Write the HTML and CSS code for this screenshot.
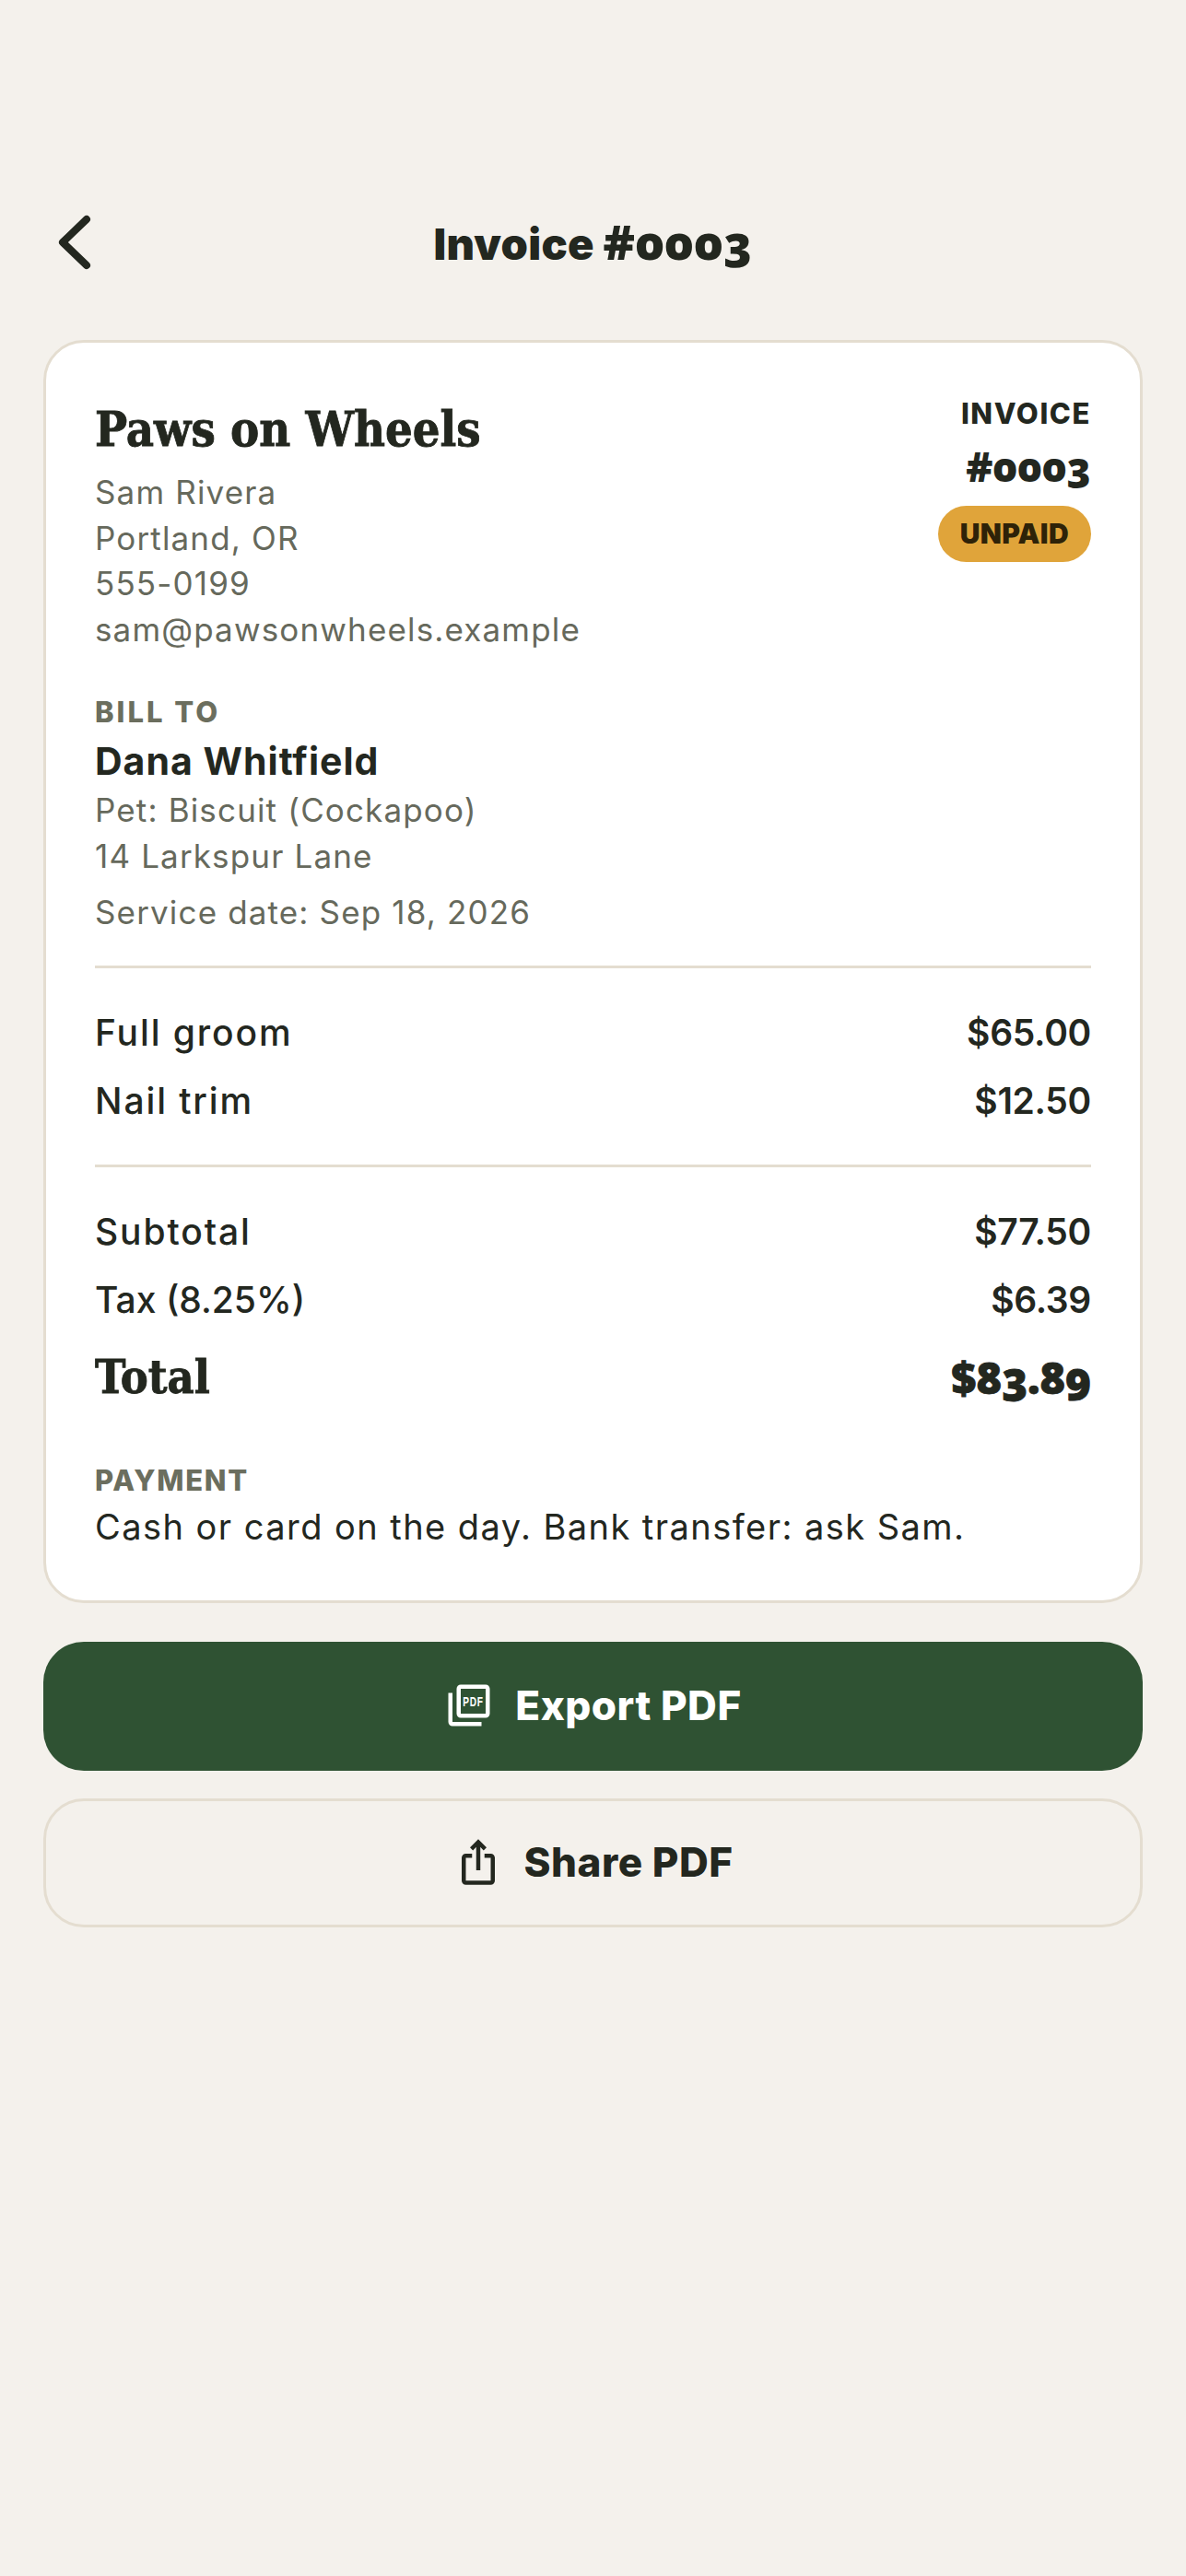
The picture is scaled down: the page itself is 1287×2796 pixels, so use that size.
FILE: index.html
```html
<!DOCTYPE html>
<html lang="en">
<head>
    <meta charset="UTF-8">
    <meta name="viewport" content="width=device-width, initial-scale=1.0">
    <title>Invoice #0003</title>
    <link rel="stylesheet" href="styles.css">
</head>
<body>
    <div class="page">
        <header class="top-bar">
            <svg class="back-icon" viewBox="0 0 40 64" aria-label="Back">
                <path d="M33 7 L7 32 L33 57"></path>
            </svg>
            <h1 class="top-title">Invoice <span class="old-nums title-nums">#0003</span></h1>
        </header>

        <main class="invoice-card">
            <div class="invoice-head">
                <div class="business">
                    <h2 class="business-name">Paws on Wheels</h2>
                    <div class="muted-line">Sam Rivera</div>
                    <div class="muted-line">Portland, OR</div>
                    <div class="muted-line">555-0199</div>
                    <div class="muted-line">sam@pawsonwheels.example</div>
                </div>
                <div class="invoice-meta">
                    <div class="meta-label">INVOICE</div>
                    <div class="meta-number old-nums">#0003</div>
                    <div class="status-badge">UNPAID</div>
                </div>
            </div>

            <div class="section-label bill-label">BILL TO</div>
            <div class="client-name">Dana Whitfield</div>
            <div class="muted-line pet-line">Pet: Biscuit (Cockapoo)</div>
            <div class="muted-line">14 Larkspur Lane</div>
            <div class="muted-line service-line">Service date: Sep 18, 2026</div>

            <div class="divider first-divider"></div>

            <div class="line-items">
                <div class="row"><span class="item-name">Full groom</span><span class="amount">$65.00</span></div>
                <div class="row"><span class="item-name">Nail trim</span><span class="amount">$12.50</span></div>
            </div>

            <div class="divider second-divider"></div>

            <div class="line-items">
                <div class="row"><span class="item-name">Subtotal</span><span class="amount">$77.50</span></div>
                <div class="row"><span>Tax (8.25%)</span><span class="amount">$6.39</span></div>
                <div class="row total-row"><span>Total</span><span class="total-amount old-nums">$83.89</span></div>
            </div>

            <div class="section-label payment-label">PAYMENT</div>
            <div class="payment-text">Cash or card on the day. Bank transfer: ask Sam.</div>
        </main>

        <div class="actions">
            <button class="action-btn export-btn">
                <svg class="btn-icon" viewBox="0 0 24 24">
                    <path fill="currentColor" d="M20 2H8c-1.1 0-2 .9-2 2v12c0 1.1.9 2 2 2h12c1.1 0 2-.9 2-2V4c0-1.1-.9-2-2-2zm0 14H8V4h12v12zM4 6H2v14c0 1.1.9 2 2 2h14v-2H4V6z"></path>
                    <text class="pdf-mark" x="9" y="12.4" textLength="10" lengthAdjust="spacingAndGlyphs">PDF</text>
                </svg>
                Export PDF
            </button>
            <button class="action-btn share-btn">
                <svg class="btn-icon" viewBox="0 0 24 24">
                    <path fill="currentColor" d="M16 5l-1.42 1.42-1.59-1.59V16h-1.98V4.83L9.42 6.42 8 5l4-4 4 4zm4 5v11c0 1.1-.9 2-2 2H6c-1.11 0-2-.9-2-2V10c0-1.11.89-2 2-2h3v2H6v11h12V10h-3V8h3c1.1 0 2 .89 2 2z"></path>
                </svg>
                Share PDF
            </button>
        </div>
    </div>
</body>
</html>
```

FILE: styles.css
```css
* {
    margin: 0;
    padding: 0;
    box-sizing: border-box;
}

body {
    background-color: #f4f1ec;
    color: #23271f;
    font-family: Inter, "Open Sans", sans-serif;
}

.page {
    min-height: 2796px;
    padding: 208px 47px 0;
}

.top-bar {
    display: flex;
    align-items: center;
    justify-content: center;
    position: relative;
    height: 110px;
    margin-bottom: 51px;
}

.back-icon {
    position: absolute;
    left: 14px;
    top: 23px;
    width: 40px;
    height: 64px;
}

.back-icon path {
    fill: none;
    stroke: #23271f;
    stroke-width: 8;
    stroke-linecap: round;
    stroke-linejoin: round;
}

.top-title {
    font-size: 47px;
    font-weight: 900;
    letter-spacing: 0.3px;
    line-height: 60px;
}

/* digits in the number sit on old style figures */
.old-nums {
    font-family: "Open Sans", Inter, sans-serif;
    font-feature-settings: "onum";
    font-weight: 800;
}

.title-nums {
    font-size: 52px;
}

.invoice-card {
    background: #fff;
    border: 3px solid #e4ddd0;
    border-radius: 44px;
    padding: 55px 53px;
    margin-bottom: 42px;
}

.invoice-head {
    display: flex;
    justify-content: space-between;
}

.business-name {
    font-family: "DejaVu Serif Condensed", "DejaVu Serif", serif;
    font-size: 52px;
    font-weight: 700;
    line-height: 78px;
    margin-bottom: 5px;
    -webkit-text-stroke: 0.8px #23271f;
}

.muted-line {
    color: #66695c;
    font-size: 35px;
    letter-spacing: 1.15px;
    line-height: 49.5px;
}

.invoice-meta {
    display: flex;
    flex-direction: column;
    align-items: flex-end;
    padding-top: 2px;
}

.meta-label {
    font-size: 31px;
    font-weight: 800;
    letter-spacing: 1.6px;
    line-height: 40px;
}

.meta-number {
    font-size: 44px;
    line-height: 54px;
    margin-top: 10px;
}

.status-badge {
    background: #e0a43a;
    color: #2e2208;
    border-radius: 31px;
    font-size: 30px;
    font-weight: 900;
    letter-spacing: 0.4px;
    line-height: 61px;
    padding: 0 24px;
    margin-top: 16px;
}

.section-label {
    color: #6b6e5e;
    font-size: 31px;
    font-weight: 800;
    line-height: 36px;
}

.bill-label {
    letter-spacing: 3px;
    margin-top: 47px;
}

.client-name {
    font-size: 41px;
    font-weight: 700;
    letter-spacing: 1px;
    line-height: 50px;
    margin-top: 10px;
}

.pet-line {
    margin-top: 4px;
}

.service-line {
    margin-top: 12px;
}

.divider {
    height: 3px;
    background: #e4ddd0;
}

.first-divider {
    margin: 32px 0 45px;
}

.second-divider {
    margin: 44px 0 45px;
}

.line-items {
    display: flex;
    flex-direction: column;
    gap: 24px;
}

.row {
    display: flex;
    justify-content: space-between;
    align-items: center;
    font-size: 39px;
    font-weight: 500;
    line-height: 50px;
}

.item-name {
    letter-spacing: 1.9px;
}

.amount {
    font-weight: 600;
    letter-spacing: -0.3px;
}

.total-row {
    font-family: "DejaVu Serif Condensed", "DejaVu Serif", serif;
    font-size: 50px;
    font-weight: 700;
    line-height: 70px;
    -webkit-text-stroke: 0.8px #23271f;
}

.total-amount {
    font-size: 47px;
    letter-spacing: -0.5px;
}

.payment-label {
    letter-spacing: 1.7px;
    margin-top: 59px;
}

.payment-text {
    font-size: 38px;
    letter-spacing: 1.45px;
    line-height: 50px;
    margin-top: 7px;
}

.actions {
    display: flex;
    flex-direction: column;
    gap: 30px;
}

.action-btn {
    display: flex;
    align-items: center;
    justify-content: center;
    gap: 23px;
    height: 140px;
    border-radius: 44px;
    font-family: Inter, "Open Sans", sans-serif;
    font-size: 44px;
    font-weight: 800;
    letter-spacing: 0.5px;
    padding-bottom: 2px;
}

.export-btn {
    background: #2f5233;
    border: none;
    color: #fff;
}

.share-btn {
    background: transparent;
    border: 3px solid #e4ddd0;
    color: #23271f;
}

.btn-icon {
    width: 54px;
    height: 54px;
}

.pdf-mark {
    fill: currentColor;
    font-family: "Liberation Sans", sans-serif;
    font-size: 6.7px;
    font-weight: 700;
}
```
